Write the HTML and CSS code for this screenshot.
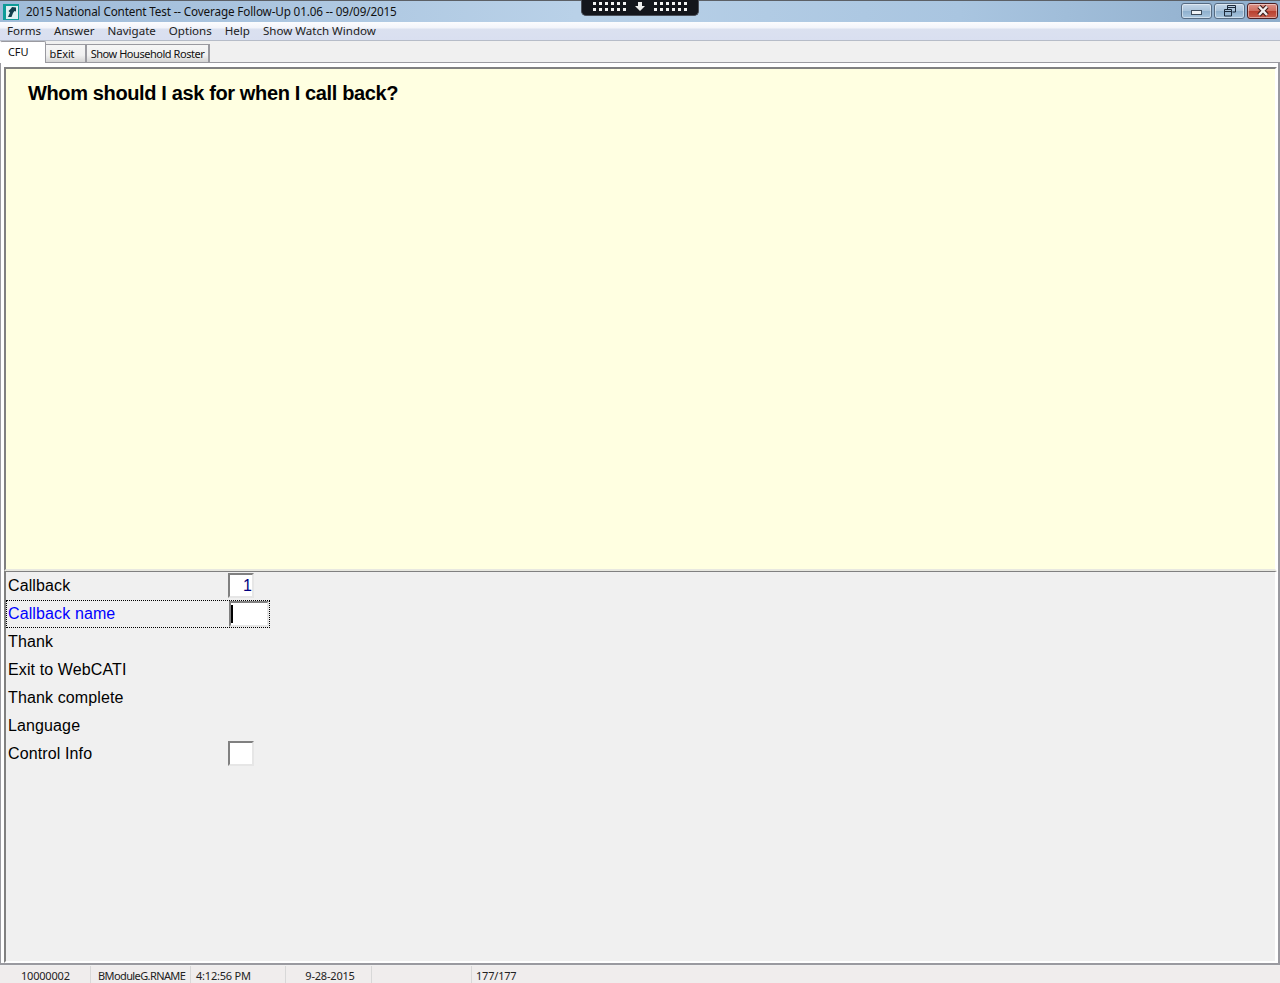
FILE: index.html
```
<!DOCTYPE html>
<html lang="en">
<head>
<meta charset="utf-8">
<title>2015 National Content Test</title>
<link rel="stylesheet" href="styles.css">
</head>
<body>
<div class="app">
  <header class="titlebar">
    <svg class="appicon" width="16" height="16" viewBox="0 0 16 16"><rect width="16" height="16" fill="#0e9c98"/><rect x="3" y="2" width="12" height="13" fill="#dff0f2"/><path d="M5 13 L7 8.500 L5.500 7 L8 4.500 L9 3 L13 3.500 L13 7.500 L11.500 7 L10 9 L8.500 13 Z" fill="#123f4c"/></svg>
    <span class="title">2015 National Content Test -- Coverage Follow-Up 01.06 -- 09/09/2015</span>
    <div class="winbtns">
      <div class="winbtn"><span class="min-glyph"></span></div>
      <div class="winbtn"><svg width="14" height="12" viewBox="0 0 14 12"><path d="M4.500 .5h8v6.500h-3M1.500 4.500h7v6.500h-7z M1.500 6.500h7 M4.500 .5v4 M4.500 2.500h8" fill="none" stroke="#1d2a3a"/></svg></div>
      <div class="winbtn close"><svg width="14" height="12" viewBox="0 0 14 12"><path d="M3 1.500 L11 10 M11 1.500 L3 10" stroke="#3a1a18" stroke-width="4.500"/><path d="M3 1.500 L11 10 M11 1.500 L3 10" stroke="#f2eeee" stroke-width="2.500"/></svg></div>
    </div>
  </header>
  <div class="remote">
    <div class="dots"><i></i><i></i><i></i><i></i><i></i><i></i><i></i><i></i><i></i><i></i><i></i><i></i></div>
    <svg width="10" height="9" viewBox="0 0 10 9"><path d="M3 0h4v4h3L5 9 0 4h3z" fill="#eee"/></svg>
    <div class="dots"><i></i><i></i><i></i><i></i><i></i><i></i><i></i><i></i><i></i><i></i><i></i><i></i></div>
  </div>
  <nav class="menubar">
    <span>Forms</span><span>Answer</span><span>Navigate</span><span>Options</span><span>Help</span><span>Show Watch Window</span>
  </nav>
  <div class="tabs">
    <div class="tab active">CFU</div>
    <div class="tab exit">bExit</div>
    <div class="tab roster">Show Household Roster</div>
  </div>
  <main class="frame">
    <section class="question"><h1>Whom should I ask for when I call back?</h1></section>
    <section class="fields">
      <div class="row"><span class="label">Callback</span><div class="input small">1</div></div>
      <div class="row focus"><span class="label">Callback name</span><div class="input wide"><span class="caret"></span></div></div>
      <div class="row"><span class="label">Thank</span></div>
      <div class="row"><span class="label">Exit to WebCATI</span></div>
      <div class="row"><span class="label">Thank complete</span></div>
      <div class="row"><span class="label">Language</span></div>
      <div class="row"><span class="label">Control Info</span><div class="input small"></div></div>
    </section>
  </main>
  <footer class="status">
    <span class="cell c1">10000002</span>
    <span class="cell c2">BModuleG.RNAME</span>
    <span class="cell c3">4:12:56 PM</span>
    <span class="cell c4">9-28-2015</span>
    <span class="cell c5"></span>
    <span class="cell c6">177/177</span>
  </footer>
</div>
</body>
</html>
```
FILE: styles.css
```
* { box-sizing: border-box; }
html, body { margin: 0; height: 100%; overflow: hidden; }
body { font-family: "Noto Sans", "Liberation Sans", sans-serif; font-size: 12px; color: #000; background: #f0f0f0; }
.app { position: relative; width: 1280px; height: 983px; display: flex; flex-direction: column; }

.titlebar { height: 22px; flex: none; display: flex; align-items: center; padding-left: 3px; border-top: 1px solid #5c6066; background: linear-gradient(to right, #9fbbd8 0%, #b9d1e8 45%, #a9c5e0 75%, #8eadcb 100%); }
.appicon { flex: none; margin-right: 7px; }
.title { font-size: 11.7px; letter-spacing: -0.14px; line-height: 16px; padding-bottom: 2px; color: #111; white-space: nowrap; }
.winbtns { margin-left: auto; display: flex; gap: 2px; padding-right: 2px; align-self: flex-start; }
.winbtn { width: 31px; height: 16px; margin-top: 2px; display: flex; align-items: center; justify-content: center; border: 1px solid #566b82; border-radius: 3px; background: linear-gradient(#c4d6e8 0%, #a8c2da 50%, #8fb0cd 52%, #a9c6df 100%); box-shadow: inset 0 0 0 1px rgba(255,255,255,.45); }
.winbtn.close { border-color: #4e1f22; background: linear-gradient(#dc9288 0%, #cf6f60 48%, #b9402f 52%, #c8604f 100%); }
.min-glyph { display: block; width: 11px; height: 5px; margin-top: 3px; background: #eef2f6; border: 1px solid #3c4a5a; }

.remote { position: absolute; left: 581px; top: 0; width: 118px; height: 16px; display: flex; align-items: center; justify-content: center; gap: 9px; padding-bottom: 2px; background: #14161c; border: 1px solid #4a4e58; border-top: 0; border-radius: 0 0 5px 5px; }
.dots { display: grid; grid-template-columns: repeat(6, 3px); grid-auto-rows: 3px; gap: 3px; }
.dots i { background: #f4f4f4; }

.menubar { height: 19px; flex: none; display: flex; align-items: center; gap: 13px; padding: 0 0 2px 7px; font-size: 11.55px; color: #222; background: linear-gradient(#fbfcfe 0, #f2f4fa 6px, #dbe1f0 7px, #d9dff0 100%); border-bottom: 1px solid #b6bcc8; }

.tabs { height: 21px; flex: none; display: flex; align-items: flex-end; }
.tab { height: 18px; font-size: 11px; letter-spacing: -0.1px; padding-top: 1px; color: #111; border: 1px solid #9a9aa0; border-bottom: 0; background: linear-gradient(#f6f6f6, #f0f0f0 60%, #d4d4d4); white-space: nowrap; text-align: center; }
.tab.active { width: 46px; height: 22px; margin-bottom: -1px; padding-top: 2px; background: #fff; border-left-color: #fff; border-radius: 2px 2px 0 0; text-align: left; padding-left: 7px; position: relative; z-index: 1; }
.tab.exit { width: 41px; margin-left: -1px; padding-right: 7px; }
.tab.roster { width: 125px; margin-left: -1px; border-left: 2px solid #9a9aa0; border-right: 2px solid #9a9aa0; letter-spacing: -0.46px; }

.frame { height: 903px; flex: none; padding: 4px 1px 0 3px; display: flex; flex-direction: column; background: #fff; border: 1px solid #9a9aa0; border-width: 1px 2px 2px 1px; }
.question { height: 504px; flex: none; padding: 12px 0 0 22px; background: #ffffe1; border-top: 2px solid #808080; border-left: 2px solid #808080; border-right: 2px solid #fff; border-bottom: 2px solid #e8e8e0; }
h1 { margin: 0; font: bold 20px/24px "Liberation Sans", Arial, sans-serif; letter-spacing: -0.37px; }
.fields { flex: 1; background: #f0f0f0; border-top: 1px solid #808080; border-left: 2px solid #808080; border-right: 2px solid #fff; border-bottom: 2px solid #fff; }
.row { height: 28px; display: flex; align-items: center; width: 264px; border: 1px dotted transparent; }
.row.focus { border-color: #000; color: #0000ff; }
.label { width: 221px; padding: 0 0 1px 1px; flex: none; font: 16px "Liberation Sans", Arial, sans-serif; letter-spacing: 0.12px; }
.input { height: 25px; background: #fff; border: 2px solid #808080; border-right-color: #e6e6e6; border-bottom-color: #e6e6e6; font: 16px/22px "Liberation Sans", Arial, sans-serif; color: #000080; text-align: right; position: relative; }
.input.small { width: 26px; margin-bottom: 1px; }
.input.wide { width: 40px; height: 26px; margin-left: 1px; }
.caret { position: absolute; left: 0; top: 2px; width: 2px; height: 18px; background: #000; }

.status { height: 17px; flex: none; margin-top: 1px; display: flex; font-size: 11px; letter-spacing: -0.2px; color: #222; background: #f0eded; }
.cell { height: 100%; line-height: 19px; white-space: nowrap; border-right: 1px solid #d8d8d8; }
.c1 { width: 91px; padding-left: 21px; }
.c2 { width: 100px; padding-left: 7px; letter-spacing: -0.6px; }
.c3 { width: 95px; padding-left: 5px; }
.c4 { width: 86px; text-align: center; padding-left: 3px; }
.c5 { width: 100px; }
.c6 { flex: 1; padding-left: 4px; border-right: 0; }
```
